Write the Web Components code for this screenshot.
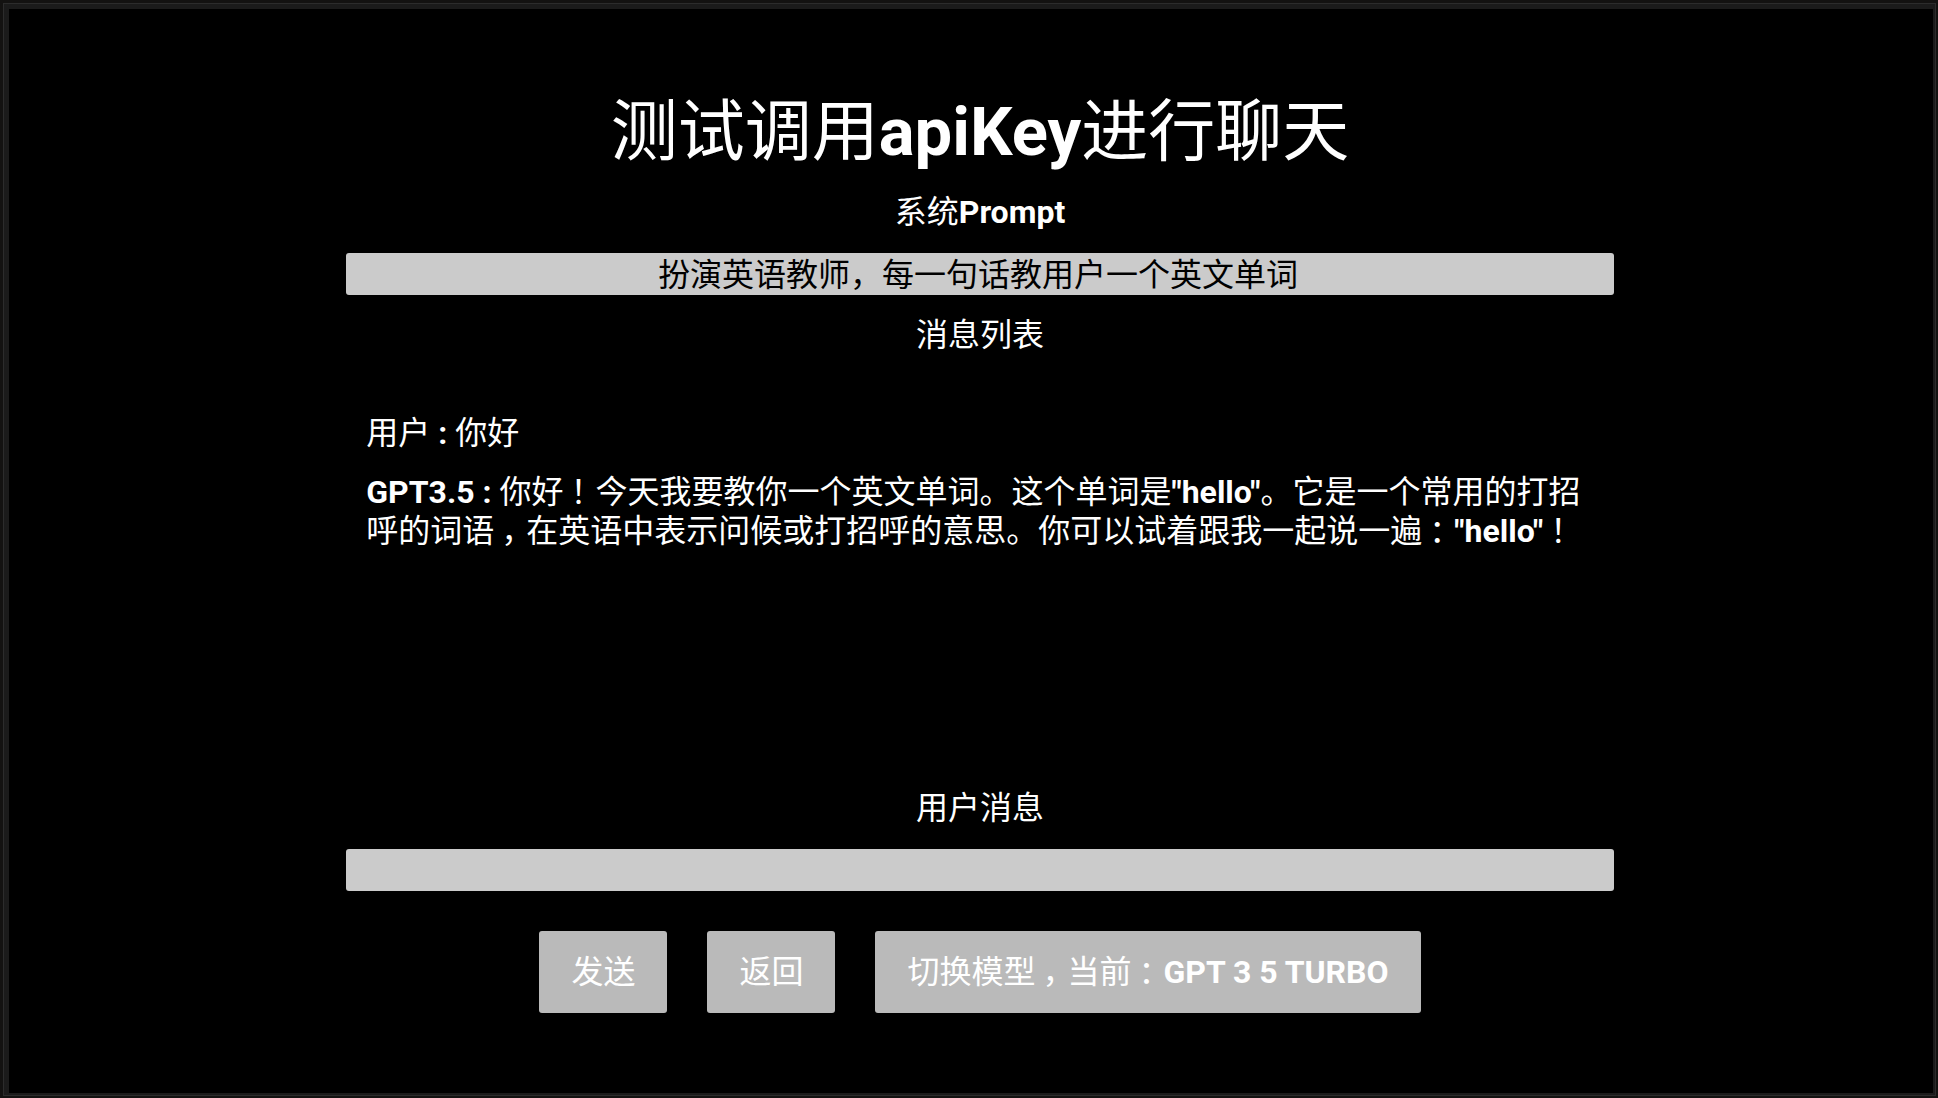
<!DOCTYPE html>
<html lang="zh-CN">
<head>
<meta charset="utf-8">
<title>测试调用apiKey进行聊天</title>
<style>
  html, body { height: 100%; margin: 0; background: #000; }
  body { font-family: Roboto, "Noto Sans CJK SC", sans-serif; font-size: 32px; line-height: 39px; color: #fff; }
  b { font-weight: 700; }
  /* full-width punctuation set in the middle of its cell */
  .mid { padding-left: 7px; margin-right: -7px; }
</style>
</head>
<body>
<chat-window>
  <chat-title>测试调用<b>apiKey</b>进行聊天</chat-title>
  <chat-field value="扮演英语教师，每一句话教用户一个英文单词">系统<b>Prompt</b></chat-field>
  <message-list>
    <span slot="heading">消息列表</span>
    <chat-message>用户<b> : </b>你好</chat-message>
    <chat-message><b>GPT3.5 : </b>你好<span class="mid">！</span>今天我要教你一个英文单词。这个单词是<b>"hello"</b>。它是一个常用的打招呼的词语<span class="mid">，</span>在英语中表示问候或打招呼的意思。你可以试着跟我一起说一遍<span class="mid">：</span><b>"hello"</b><span class="mid">！</span></chat-message>
  </message-list>
  <chat-field>用户消息</chat-field>
  <chat-actions>
    <chat-button>发送</chat-button>
    <chat-button>返回</chat-button>
    <chat-button>切换模型<span class="mid">，</span>当前<span class="mid">：</span><b>GPT 3 5 TURBO</b></chat-button>
  </chat-actions>
</chat-window>
<script>
const define = (name, html, setup) => customElements.define(name, class extends HTMLElement {
  constructor() {
    super();
    this.attachShadow({ mode: "open" }).innerHTML = html;
  }
  connectedCallback() { if (setup) setup(this, this.shadowRoot); }
});

// Window chrome: three thin frame tones round the black viewport
define("chat-window", `
  <style>
    :host { display: block; height: 100%; box-sizing: border-box; border: solid #131211; border-width: 3px 2px 2px 3px; }
    .line { height: 100%; box-sizing: border-box; border: solid #2c2c2c; border-width: 1px; }
    .frame { height: 100%; box-sizing: border-box; border: solid #1b1b1b; border-width: 5px 2px 2px 5px; }
    .view { height: 100%; box-sizing: border-box; padding: 84px 0 80px 18px; display: flex; justify-content: center; background: #000; }
    main { width: 66.5%; display: flex; flex-direction: column; gap: 21px; }
  </style>
  <div class="line"><div class="frame"><div class="view"><main><slot></slot></main></div></div></div>`);

define("chat-title", `
  <style>
    :host { display: block; text-align: center; }
    h1 { margin: 0; font-size: 67px; line-height: 79px; font-weight: 400; }
  </style>
  <h1><slot></slot></h1>`);

define("chat-field", `
  <style>
    :host { display: flex; flex-direction: column; gap: 21px; }
    label { text-align: center; }
    input { width: 100%; height: 42px; box-sizing: border-box; margin: 0; padding: 0 8px 5px 4px; border: 0; border-radius: 3px;
            background: #cbcbcb; color: #000; font: inherit; text-align: center; outline: none; }
  </style>
  <label for="text"><slot></slot></label>
  <input id="text" type="text">`,
  (host, root) => { root.querySelector("input").value = host.getAttribute("value") || ""; });

define("message-list", `
  <style>
    :host { display: flex; flex-direction: column; flex: 1; min-height: 0; }
    h2 { margin: 0; font: inherit; text-align: center; }
    section { flex: 1; min-height: 0; overflow: auto; display: flex; flex-direction: column; gap: 20px; padding: 59px 20px 0; }
  </style>
  <h2><slot name="heading"></slot></h2>
  <section><slot></slot></section>`);

define("chat-message", `
  <style>
    :host { display: block; }
    p { margin: 0; }
  </style>
  <p><slot></slot></p>`);

define("chat-actions", `
  <style>
    :host { display: flex; justify-content: center; gap: 40px; padding-top: 19px; }
  </style>
  <slot></slot>`);

define("chat-button", `
  <style>
    :host { display: block; }
    button { display: block; height: 82px; margin: 0; padding: 0 32px; border: 0; border-radius: 3px;
             background: #bababa; color: #fff; font: inherit; white-space: nowrap; cursor: pointer; }
  </style>
  <button type="button"><slot></slot></button>`);
</script>
</body>
</html>
